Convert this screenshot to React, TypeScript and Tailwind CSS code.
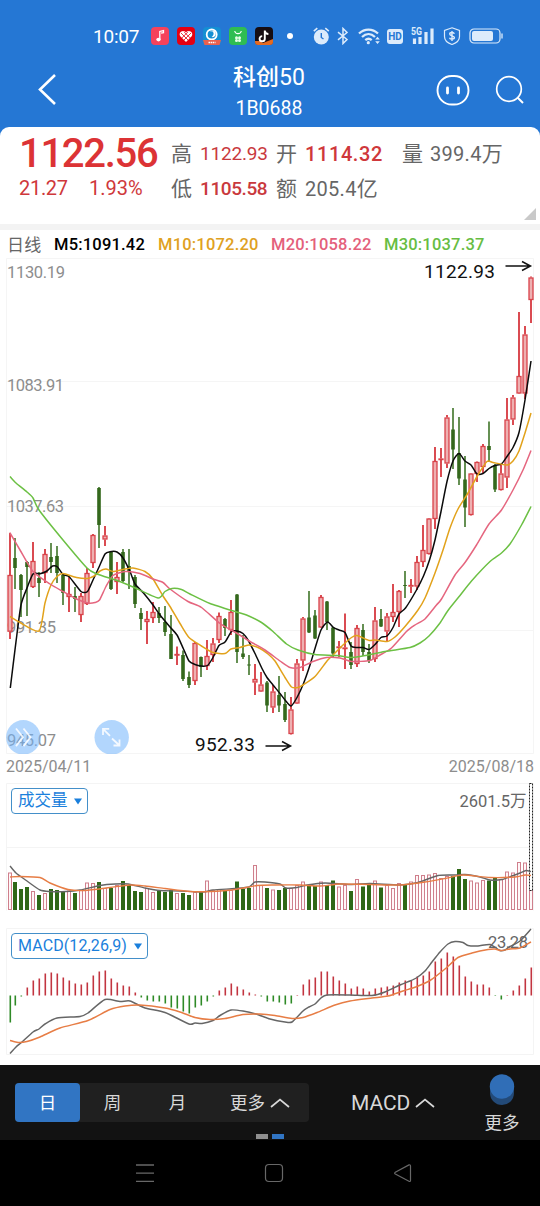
import React from 'react';

type Candle = [number, number, number, number, number];
type Point = [number, number];

// [high, bodyTop, bodyBottom, low, rising]
const CANDLES: Candle[] = [
    [532.7, 575, 631.7, 639, 1], [538, 558, 568, 589, 0], [574, 575, 590, 617, 0], [561, 562, 567, 616, 0],
    [542, 561, 587, 588, 1], [572, 578, 583, 597, 0], [549, 554, 573, 583, 1], [543, 557, 562, 573, 0],
    [546, 556, 573, 583, 0], [573, 575, 593, 605, 0], [577, 594, 597, 612, 1], [587, 596, 599, 612, 0],
    [593, 596, 615, 622, 1], [568, 573, 604, 605, 1], [534, 535, 563, 568, 1], [487, 488, 525, 548, 0],
    [526, 535.5, 539.5, 546, 1], [552, 552, 589, 590, 0], [562, 577, 582, 594, 1], [549, 552, 581, 582, 0],
    [549, 566, 572, 589, 0], [575, 577, 604, 608, 0], [608, 613, 619, 630, 0], [611, 619, 622, 644, 1],
    [602, 612, 618, 623, 1], [607, 613, 618, 623, 0], [606, 622, 632, 636, 0], [615, 634, 659, 659, 0],
    [646.5, 654, 655, 665, 1], [650.5, 655, 679, 681, 0], [671.5, 677, 685, 688, 0], [642, 643, 681, 685, 1],
    [656.5, 657, 667, 677, 0], [640, 656, 666, 670, 1], [638, 643.5, 655, 662, 1], [612.5, 616, 640, 643, 1],
    [618, 619, 628, 636, 0], [600, 612, 630, 635, 1], [594, 594.5, 652, 663, 0], [635, 653.5, 657, 659, 0],
    [655, 664.5, 665.5, 675, 0], [664, 679, 682.5, 695, 1], [672, 684.5, 691.5, 692, 1], [681, 682.5, 705.5, 712, 0],
    [685, 691.5, 707.5, 713, 1], [676, 695, 705.5, 712, 0], [692, 704, 720, 722, 0], [697, 709.5, 734, 734.5, 1],
    [659, 663.5, 703.5, 704, 1], [617, 618.5, 660.5, 671, 1], [591, 617.5, 632.5, 633, 0], [610, 615.5, 638.5, 639, 0],
    [595, 597, 627.5, 628, 1], [601, 601.5, 622, 630, 0], [627, 627.5, 653.5, 657, 0], [641, 646.5, 648, 657, 1],
    [613.5, 647.5, 648.5, 669, 1], [642, 652, 665, 669, 0], [625, 628, 664, 667, 1], [624, 630, 652, 656, 0],
    [644, 652, 661, 663, 0], [607, 620.5, 659, 662, 1], [609, 619, 626.5, 627, 0], [613, 616.5, 631.5, 642, 1],
    [584, 612, 617, 622, 1], [590, 591, 612, 627, 1], [571, 585, 586, 598, 0], [579, 585, 586.5, 593, 1],
    [556, 562, 586.5, 590, 1], [525, 550, 562, 567, 1], [518, 518.5, 554, 554.5, 1], [447, 461, 519, 529, 1],
    [448, 458.5, 459.5, 477, 1], [415, 417.5, 463.5, 468, 1], [408, 429.5, 449.5, 469, 0], [417, 453, 478.5, 485, 0],
    [456, 479.5, 507.5, 527, 0], [473, 473.5, 515, 515.5, 1], [461.5, 462, 474, 482, 1], [444, 446, 467, 473, 1],
    [421.5, 446, 450, 462, 0], [464, 465, 489.5, 492, 0], [465, 473.5, 490, 490.5, 1], [398, 419.5, 477.5, 488, 1],
    [395, 397.5, 419.5, 425, 1], [312, 376, 393.5, 394, 1], [326, 334.5, 393.5, 399, 1], [276.5, 277.5, 300, 323, 1],
];

const VOLUME_TOPS = [
    872.5, 882, 889, 887, 891, 895, 893, 889, 890, 891, 890.5, 893, 890, 882.5, 883, 882, 888, 888, 885, 881, 885, 891,
    892, 888, 892, 890, 892, 890, 893, 893, 895, 892, 892, 880.5, 890, 889, 890.5, 890, 881.5, 889, 888, 865, 885, 888,
    889.5, 890, 888, 888, 885, 881.5, 885, 886, 881.5, 885, 880.5, 886.5, 885, 891, 879, 886.5, 883, 880.5, 887.5, 885,
    888, 883, 885, 881.5, 875, 875, 874.5, 873, 878, 876, 876, 869, 879, 880.5, 882.5, 880, 880.5, 877, 879, 871.5,
    872.5, 862, 862.5, 890,
];

const MACD_BARS = [
    -27, -10, -1, 8, 15, 17, 22, 23, 22, 18, 15, 12, 11, 13, 20, 24, 25, 17, 13, 10, 9, 3, -2, -5, -6, -6, -8, -12,
    -13, -16, -18, -12, -10, -6, -1, 5, 8, 12, 9, 6, 3, 1, -1, -6, -6, -7, -9, -8, 0.5, 11, 16, 18, 24, 24, 19, 15, 12,
    7, 9, 7, 4, 7, 8, 9, 10, 13, 15, 15, 19, 20, 24, 34, 37, 43, 39, 30, 19, 14, 11, 11, 8, -0.5, -4, 0.5, 5, 10, 17, 28,
];

const M5: Point[] = [
    [10.3, 688], [16, 641.7], [21, 605], [27, 588], [33, 574], [40, 573.7], [47, 571], [52.5, 566], [57.5, 567],
    [63, 574.5], [69, 576.5], [81, 591.5], [87.5, 591.5], [93, 580], [99.5, 566], [105, 554], [110, 551.7], [117, 552],
    [123, 558], [130, 571.5], [135, 584], [143.5, 593], [153, 605], [160, 615], [170, 627], [177, 635], [183.5, 649],
    [189, 661], [195, 664.5], [201, 666], [207.5, 665.5], [213, 657.5], [219, 645.5], [225, 642], [231.5, 631.5],
    [237, 631], [243, 633.5], [248, 640], [255, 653.5], [262, 668.5], [267, 677.5], [273, 685], [280, 693.5],
    [285, 700], [291, 706], [297, 697.5], [303.5, 683.5], [310, 665], [315, 648.5], [321, 630], [327.5, 622],
    [333.5, 627.5], [339, 630], [345, 632.5], [351, 646], [357, 647.5], [363, 647.5], [369, 649.5], [375, 644.5],
    [381, 637.5], [387, 636], [393, 627.5], [399, 614], [405.5, 608], [416.5, 590], [423.5, 576], [429.5, 560],
    [435, 540], [441, 511.5], [447, 481.5], [453, 461], [459, 453.5], [465, 461], [471, 465], [477, 474], [483, 473.5],
    [489, 468.5], [495, 465.5], [501.5, 464], [507, 456.5], [513, 447.5], [519, 432.5], [525, 400], [531, 361],
];

const M10: Point[] = [
    [10, 616.5], [20, 622.5], [39, 631], [45, 603], [51, 585], [57, 576.5], [63, 573.5], [76.5, 577.5], [87.5, 578.5],
    [95, 575.5], [100, 571], [106, 569], [113, 571.5], [123, 569.5], [133, 568], [145, 571.5], [153, 579], [163, 596],
    [170, 606.5], [180, 623.5], [189, 637.5], [201.5, 646], [213, 652.5], [225, 653.5], [231, 649], [240, 647.5],
    [249, 645], [260, 648.5], [268, 654], [275, 661], [285, 677.5], [291.5, 687], [298, 687.5], [303, 685],
    [315, 676.5], [327, 661], [333, 655], [343, 645], [351.5, 637.5], [357, 635.5], [369, 640.5], [375, 640],
    [387, 641.5], [395, 637], [405, 626.5], [418, 610], [425, 598], [435, 573], [443, 550], [450, 528], [458, 509],
    [468, 493], [477, 476.5], [487, 461.5], [493, 462.5], [507, 465], [513, 461], [519, 451], [525, 433], [531, 413],
];

const M20: Point[] = [
    [10, 533], [20, 550], [33, 571.5], [50, 584], [63, 591.5], [76.5, 599], [88, 603], [95, 602.5], [99.5, 600],
    [106, 586.5], [113, 575.5], [125, 571.5], [140, 573.5], [153, 579], [163, 582.5], [170, 589], [188, 601.5],
    [201.5, 607.5], [220, 623.5], [236.5, 633], [250, 641.5], [265, 650], [280, 661], [290, 667.5], [300, 667.5],
    [313, 661.5], [326.5, 657.5], [340, 658], [351.5, 661.5], [370, 660.5], [380, 655], [391.5, 648], [406.5, 631.5],
    [415, 625], [425, 619], [436.5, 605], [441.5, 599], [455, 575], [465, 562.5], [476.5, 545], [489, 524],
    [501.5, 510], [513, 490], [523, 470], [531, 450.5],
];

const M30: Point[] = [
    [10, 476.5], [16, 483], [27, 492], [33, 498], [39, 510], [63, 540], [87, 568], [97, 574], [117, 580.5],
    [133, 587], [158, 598], [165, 591.5], [172, 588.5], [181.5, 589.5], [190, 594], [210, 603.5], [236.5, 612],
    [246.5, 615], [261.5, 622.5], [273, 631.5], [286.5, 644], [298, 650], [315, 654.5], [336.5, 655.5], [350, 657.5],
    [360, 656.5], [385, 651.5], [410, 647.5], [420, 643], [429, 636], [440, 623], [448, 610.5], [460, 595.5],
    [471.5, 581], [490, 561.5], [501.5, 553], [510, 544], [521.5, 525], [531, 506.5],
];

const VOL_FAST: Point[] = [
    [10, 866], [16, 873], [27, 881], [40, 890], [50, 891.5], [66, 891.5], [80, 890], [100, 885.5], [115, 884],
    [128, 884], [145, 888], [160, 890.5], [180, 891], [203, 892], [213, 890], [235, 888.5], [249, 887], [255, 882],
    [265, 882], [280, 884], [286, 888], [297, 887.5], [307, 885], [325, 883], [350, 884.5], [370, 883.5], [400, 885],
    [418, 882.5], [438, 875.5], [455, 875], [465, 874.5], [480, 877], [490, 880], [502, 879.5], [512, 876],
    [520, 873], [526, 870.5], [531, 871.5],
];

const VOL_SLOW: Point[] = [
    [10, 877], [20, 876.5], [40, 877.5], [50, 883], [68, 889.5], [85, 890.5], [110, 887.5], [130, 885], [145, 886],
    [165, 888.5], [190, 891.5], [210, 891.5], [235, 889.5], [257, 885.5], [275, 885], [300, 885], [320, 886],
    [340, 884], [370, 884.5], [400, 885], [425, 882], [445, 878.5], [463, 875], [490, 877.5], [515, 877], [525, 875],
    [531, 875.5],
];

const DIF: Point[] = [
    [10, 1053.5], [16, 1047], [22, 1042], [33, 1032], [39, 1029], [45, 1024], [57, 1018], [80, 1016.5], [88, 1013],
    [105, 999.5], [120, 1001.5], [130, 1001], [145, 1008], [165, 1012.5], [189, 1024], [195, 1023], [202, 1023.5],
    [213, 1020.5], [220, 1015.5], [231, 1010], [243, 1011], [256, 1014], [270, 1019], [285, 1022], [292, 1022],
    [303, 1011], [309, 1007], [315, 1004], [321, 998], [327, 995], [350, 995], [372, 995.5], [385, 992], [400, 985],
    [410, 981], [417, 977.5], [425, 971], [432, 962], [440, 952], [448, 944], [455, 941.5], [463, 942.5],
    [468, 945.5], [478, 946], [490, 944.5], [500, 950.5], [505, 950], [510, 946.5], [520, 941], [531, 929],
];

const DEA: Point[] = [
    [10, 1040.5], [18, 1042.5], [27, 1041.5], [40, 1037], [60, 1028], [88, 1020.5], [110, 1009.5], [125, 1006],
    [140, 1005], [165, 1008], [180, 1012], [195, 1017.5], [210, 1019.5], [225, 1018.5], [243, 1014.5], [260, 1014],
    [275, 1015.5], [292, 1018.5], [303, 1017.5], [317, 1012.5], [335, 1005], [350, 1001], [372, 998], [388, 996],
    [403, 991], [417, 986.5], [430, 980.5], [445, 969], [458, 957.5], [472, 953], [488, 949.5], [495, 949],
    [501, 950.5], [510, 949], [520, 948], [531, 942],
];

const barX = (i: number) => (i === 0 ? 10 : 9 + i * 6);

// Catmull-Rom through all points
const toPath = (pts: Point[]) => {
    let d = `M${pts[0][0]} ${pts[0][1]}`;
    for (let i = 0; i < pts.length - 1; i++) {
        const p0 = pts[i - 1] || pts[i];
        const p1 = pts[i];
        const p2 = pts[i + 1];
        const p3 = pts[i + 2] || p2;
        d += `C${p1[0] + (p2[0] - p0[0]) / 9} ${p1[1] + (p2[1] - p0[1]) / 9} ${p2[0] - (p3[0] - p1[0]) / 9} ${p2[1] - (p3[1] - p1[1]) / 9} ${p2[0]} ${p2[1]}`;
    }
    return d;
};

const Line: React.FC<{ points: Point[]; color: string; width?: number }> = ({ points, color, width = 1.5 }) => (
    <path d={toPath(points)} fill="none" stroke={color} strokeWidth={width} strokeLinejoin="round" />
);

const StatusBar: React.FC = () => (
    <div className="flex items-center h-[54px] pt-[18px] pl-[93px] text-white">
        <span className="w-[58px] text-[19px] tracking-[-0.2px] leading-none">10:07</span>
        <div className="flex gap-2">
            <svg className="w-[18px] h-[18px]" viewBox="0 0 18 18">
                <rect width="18" height="18" rx="4" fill="#f5425b" />
                <path d="M8.8 12.3V4.4l3.7-.8v2l-2.4.5" fill="none" stroke="#fff" strokeWidth="1.3" />
                <ellipse cx="7.5" cy="12.6" rx="2.2" ry="1.8" fill="#fff" />
            </svg>
            <svg className="w-[18px] h-[18px]" viewBox="0 0 18 18">
                <rect width="18" height="18" rx="4" fill="#e50012" />
                <path d="M9 15L3.3 9.2C1 6 5.5 1.8 9 5.3c3.5-3.5 8 .7 5.7 3.9z" fill="#fff" />
                <path d="M4 6l8 8M7 4.8l6.5 6.5M14 6l-8 8M11 4.8l-6.5 6.5" stroke="#e50012" strokeWidth=".8" />
            </svg>
            <svg className="w-[18px] h-[18px]" viewBox="0 0 18 18">
                <rect width="18" height="18" rx="4" fill="#148fd3" />
                <circle cx="8.7" cy="7.5" r="5" fill="none" stroke="#fff" strokeWidth="1.8" />
                <path d="M7 4.5c4-1 5 3.5 1.5 5.5 4 1 5.5-4 3-6z" fill="#fff" />
                <path d="M0 13h18l-1.5 5h-15z" fill="#e9604f" />
                <path d="M5.5 15.5h7" stroke="#fff" strokeWidth="1.4" strokeDasharray="1.5 .6" />
            </svg>
            <svg className="w-[18px] h-[18px]" viewBox="0 0 18 18">
                <rect width="18" height="18" rx="4" fill="#2fbd52" />
                <path d="M5.7 4c.6 3.5 6 3.5 6.6 0" fill="none" stroke="#fff" strokeWidth="1.1" />
                <g fill="#e6ffe9">
                    <circle cx="7.5" cy="10.7" r="1.5" />
                    <circle cx="10.5" cy="10.7" r="1.5" />
                    <circle cx="7.5" cy="13.5" r="1.5" />
                    <circle cx="10.5" cy="13.5" r="1.5" />
                </g>
            </svg>
            <svg className="w-[18px] h-[18px]" viewBox="0 0 18 18">
                <rect width="18" height="18" rx="4" fill="#160d12" />
                <path d="M0 14l5 0 3 2 10-4v3a3 3 0 0 1-3 3H3a3 3 0 0 1-3-3z" fill="#e56a20" />
                <path d="M9.8 3.5v8.2a2.6 2.6 0 1 1-2.6-2.6M9.8 4c.4 2 1.8 3 3.6 3" fill="none" stroke="#fff" strokeWidth="1.9" />
            </svg>
        </div>
        <span className="w-[6px] h-[6px] rounded-full bg-white ml-[14px]" />
        <svg className="w-[18px] h-[18px] ml-5" viewBox="0 0 18 18">
            <circle cx="8.3" cy="10" r="7.5" fill="#dcebfb" />
            <path d="M.8 4.200l3.500-3M15.800 4.200l-3.500-3" stroke="#dcebfb" strokeWidth="1.6" />
            <path d="M8.300 6v4.500l2.200 1.500" fill="none" stroke="#2577d4" strokeWidth="1.4" />
        </svg>
        <svg className="w-[12px] h-[18px] ml-[6px]" viewBox="0 0 12 18">
            <path d="M1 5.2l9 7.3-4 4V1.5l4 4-9 7.3" fill="none" stroke="#dcebfb" strokeWidth="1.5" />
        </svg>
        <svg className="w-[22px] h-[18px] ml-[9px]" viewBox="0 0 22 18">
            <g fill="none" stroke="#dcebfb" strokeWidth="2.3">
                <path d="M1 6.5c5.5-5.3 13.5-5.3 19 0" />
                <path d="M4 10c4-3.8 9-3.8 13 0" />
                <path d="M7.3 13.2c2-1.8 4.4-1.8 6.4 0" />
            </g>
            <circle cx="10.3" cy="15.7" r="1.6" fill="#dcebfb" />
            <path d="M19.5 9.8l2.3 2.8h-4.6zM19.5 17l2.3-2.8h-4.6z" fill="#dcebfb" />
        </svg>
        <span className="w-4 h-[15px] ml-[7px] rounded-[3px] bg-[#dcebfb] text-[#2577d4] text-[10px] font-bold leading-[15px] text-center">HD</span>
        <svg className="w-6 h-[18px] ml-2" viewBox="0 0 24 18">
            <text x="0" y="8" fontSize="10" fontWeight="700" fill="#dcebfb" textLength="11" lengthAdjust="spacingAndGlyphs">5G</text>
            <path d="M3.5 11.5v5.500M9 10v7M15 5v12M21 1.500v15.500" stroke="#dcebfb" strokeWidth="3.200" />
        </svg>
        <svg className="w-[18px] h-[18px] ml-2" viewBox="0 0 18 18">
            <path d="M9 .8l7.5 2.7v6c0 4-3 6.5-7.5 8-4.5-1.5-7.5-4-7.5-8v-6z" fill="none" stroke="#dcebfb" strokeWidth="1.2" />
            <path d="M11.3 6.8c-.4-1.7-4.6-1.7-4.6.3 0 2.3 4.7 1.2 4.7 3.5 0 2-4.3 2-4.900.1M9 4v10" fill="none" stroke="#dcebfb" strokeWidth="1.4" />
        </svg>
        <svg className="w-[34px] h-[18px] ml-2" viewBox="0 0 34 18">
            <rect x="1" y="2" width="30" height="14" rx="4" fill="none" stroke="#dcebfb" strokeWidth="1.2" />
            <rect x="3" y="4" width="21" height="10" rx="2" fill="#dcebfb" />
            <path d="M33 6.5v5" stroke="#dcebfb" strokeWidth="1.3" />
        </svg>
    </div>
);

const TitleBar: React.FC = () => (
    <div className="flex items-start justify-between h-[73px] pl-[37px] pr-4 text-white">
        <svg className="w-[20px] h-[34px] mt-[18px]" viewBox="0 0 20 34">
            <path d="M18 3L3 17.5 18 32" fill="none" stroke="#fff" strokeWidth="2.6" />
        </svg>
        <div className="flex flex-col items-center pt-[10px] pl-[45px]">
            <h1 className="text-[23px] leading-[28px] font-medium">科创<span className="font-normal">50</span></h1>
            <p className="text-[19.5px] leading-[22px] mt-[6px] tracking-[0px]">1B0688</p>
        </div>
        <div className="flex items-center gap-[25px] pt-[20px]">
            <svg className="w-[34px] h-[32px]" viewBox="0 0 34 32">
                <rect x="1.5" y="2" width="31" height="28.5" rx="14.2" fill="none" stroke="#fff" strokeWidth="1.9" />
                <path d="M11.5 14v5M22.500 14v5" stroke="#fff" strokeWidth="2.8" strokeLinecap="round" />
            </svg>
            <svg className="w-[29px] h-[30px]" viewBox="0 0 29 30">
                <circle cx="14" cy="14" r="12.3" fill="none" stroke="#fff" strokeWidth="1.7" />
                <path d="M22.5 22.5l5.500 5.500" stroke="#fff" strokeWidth="2" />
            </svg>
        </div>
    </div>
);

const QuotePanel: React.FC = () => (
    <section className="relative flex h-[97px] rounded-t-[9px] bg-white">
        <div className="w-[171px] pl-[19px] pt-[5px] text-[#dc3335]">
            <p className="text-[40px] leading-[44px] font-medium tracking-[-1.3px]">1122.56</p>
            <p className="flex text-[20px] leading-[24px] text-[#cf383b]">
                <span className="w-[70px] tracking-[-0.3px]">21.27</span>
                <span className="tracking-[0px]">1.93%</span>
            </p>
        </div>
        <div className="pt-[12px] text-[20px] leading-[30px] text-[#666] whitespace-nowrap">
            <div className="flex">
                <span className="w-[29px] text-[21px]">高</span>
                <span className="w-[76px] text-[19px] tracking-[-0.2px] text-[#c9393d]">1122.93</span>
                <span className="w-[29px] text-[21px]">开</span>
                <span className="w-[97px] font-medium text-[#cf383b] tracking-[0.6px]">1114.32</span>
                <span className="w-[28px] text-[21px]">量</span>
                <span className="tracking-[0.3px]">399.4<span className="text-[21px]">万</span></span>
            </div>
            <div className="flex mt-[5px]">
                <span className="w-[29px] text-[21px]">低</span>
                <span className="w-[76px] text-[19px] font-medium tracking-[-0.4px] text-[#c9393d]">1105.58</span>
                <span className="w-[29px] text-[21px]">额</span>
                <span className="tracking-[0.3px]">205.4<span className="text-[21px]">亿</span></span>
            </div>
        </div>
        <svg className="absolute right-1 bottom-1 w-3 h-3" viewBox="0 0 12 12">
            <path d="M12 0v12H0z" fill="#c9c9c9" />
        </svg>
    </section>
);

const Averages: React.FC = () => (
    <div className="flex items-center h-[28px] pt-[3px] pl-[7px] text-[16.5px] font-medium whitespace-nowrap tracking-[0.2px]">
        <span className="w-[47px] text-[17px] font-normal text-[#666]">日线</span>
        <span className="w-[104px] text-black">M5:1091.42</span>
        <span className="w-[113px] text-[#dfa122]">M10:1072.20</span>
        <span className="w-[113px] text-[#e4607b]">M20:1058.22</span>
        <span className="text-[#67bd43]">M30:1037.37</span>
    </div>
);

const PriceChart: React.FC = () => (
    <svg className="block w-[540px] h-[496px]" viewBox="0 258 540 496">
        <g stroke="#f5f5f5" strokeWidth="1" fill="none">
            <path d="M6.5 258.5H533.5V753.5H6.500zM6.5 381.5H533.5M6.500 506.5H533.5M6.5 630.5H533.5" />
        </g>
        <g fill="#8d8d8d" fontSize="16.5">
            <text x="7" y="278" textLength="58">1130.19</text>
            <text x="7" y="391" textLength="57">1083.91</text>
            <text x="7" y="512" textLength="57">1037.63</text>
            <text x="7" y="633" textLength="49">991.35</text>
            <text x="7" y="746" textLength="49">945.07</text>
        </g>
        {CANDLES.map(([high, top, bottom, low, up], i) => {
            const x = barX(i);
            return up ? (
                <g key={i} stroke="#d9434a">
                    <path d={`M${x} ${high}V${top}M${x} ${bottom}V${low}`} strokeWidth="1.9" />
                    <rect x={x - 2} y={top + 0.5} width="4" height={Math.max(bottom - top - 1, 0.6)} fill="#eeb0b1" strokeWidth="1.300" />
                </g>
            ) : (
                <g key={i}>
                    <path d={`M${x} ${high}V${low}`} stroke="#4b7d35" strokeWidth="1.7" />
                    <rect x={x - 1.8} y={top} width="3.6" height={Math.max(bottom - top, 1)} fill="#34681c" />
                </g>
            );
        })}
        <Line points={M5} color="#0b0b0b" />
        <Line points={M10} color="#e2a21b" />
        <Line points={M20} color="#e5667f" />
        <Line points={M30} color="#6cc044" />
        <g fill="#111" fontSize="19">
            <text x="424" y="277.5" textLength="71">1122.93</text>
            <text x="195" y="750.5" textLength="60">952.33</text>
        </g>
        <g fill="none" stroke="#111" strokeWidth="1.5">
            <path d="M505.5 266h24M522 261.5l8.500 4.500-8.500 4.500" />
            <path d="M265.5 746h24M282 741.5l8.500 4.500-8.500 4.500" />
        </g>
        <g fill="#72b4fb" fillOpacity=".55">
            <circle cx="23.3" cy="737.3" r="17.2" />
            <circle cx="111.7" cy="737.3" r="17.2" />
        </g>
        <g fill="none" stroke="#fff" strokeOpacity=".85" strokeWidth="1.8">
            <path d="M16 728.5l7 8.8-7 8.8M23.5 728.5l7 8.8-7 8.8" />
            <path d="M103 735v-6.2h6.2M103 728.8l7 7M119.5 739.5v6h-6M119.5 745.5l-7.500-7" />
        </g>
    </svg>
);

const IndicatorButton: React.FC<{ label: string; className: string }> = ({ label, className }) => (
    <button className={`absolute left-[11px] flex items-center justify-between rounded-[4px] border border-[#438fc9] bg-white pl-[6px] pr-[5px] text-[#1a7fdc] whitespace-nowrap ${className}`}>
        <span>{label}</span>
        <svg className="w-2 h-[7px]" viewBox="0 0 8 7">
            <path d="M0 .5h8L4 6.500z" fill="#1a7fdc" />
        </svg>
    </button>
);

const VolumeChart: React.FC = () => (
    <div className="relative">
        <svg className="block w-[540px] h-[146px]" viewBox="0 777 540 146">
            <path d="M6.5 910.5V783.5H533.5V910.5M6.5 847.5H533.5" fill="none" stroke="#f4f4f4" />
            {VOLUME_TOPS.map((top, i) => {
                const x = barX(i);
                return CANDLES[i][4] ? (
                    <rect key={i} x={x - 1.5} y={top + 0.5} width="3" height={909 - top} fill="#fff7f8" stroke="#cf7f8c" />
                ) : (
                    <rect key={i} x={x - 2} y={top} width="4" height={910 - top} fill="#2f6817" />
                );
            })}
            <rect x="529.5" y="783.5" width="3" height="107" fill="#fff" stroke="#222" strokeDasharray="2 1" />
            <Line points={VOL_FAST} color="#666" width={1.4} />
            <Line points={VOL_SLOW} color="#e77d45" width={1.4} />
            <text x="459.5" y="807" fontSize="16.5" fill="#666" textLength="67">2601.5万</text>
        </svg>
        <IndicatorButton label="成交量" className="top-[11px] w-[77px] h-[26px] text-[16.5px]" />
    </div>
);

const MacdChart: React.FC = () => (
    <div className="relative">
        <svg className="block w-[540px] h-[142px]" viewBox="0 923 540 142">
            <path d="M6.5 928.5H533.5V1054.5H6.500z" fill="none" stroke="#f4f4f4" />
            {MACD_BARS.map((v, i) => (
                <path key={i} d={`M${barX(i) + 0.3} 995.5V${995.5 - v}`} stroke={v > 0 ? '#c23540' : '#2f8a27'} strokeWidth="1.6" />
            ))}
            <text x="488" y="948" fontSize="16.5" fill="#666" textLength="40">23.28</text>
            <Line points={DIF} color="#666" />
            <Line points={DEA} color="#e77d45" />
        </svg>
        <IndicatorButton label="MACD(12,26,9)" className="top-[10px] w-[137px] h-[26px] text-[16px] tracking-[0.1px]" />
    </div>
);

const ChevronUp = () => (
    <svg className="w-5 h-[10px]" viewBox="0 0 20 10">
        <path d="M1 9l9-7.5L19 9" fill="none" stroke="#d8d8d8" strokeWidth="1.7" />
    </svg>
);

const BottomBar: React.FC = () => (
    <div className="relative flex h-[75px] bg-[#121212] text-[#d8d8d8]">
        <div className="flex mt-[18px] ml-[15px] w-[294px] h-[39px] rounded-[4px] bg-[#202020] text-[17.5px]">
            <button className="w-[65px] rounded-[4px] bg-[#3175c3] pt-[2px] text-white">日</button>
            <button className="w-[65px] pt-[2px]">周</button>
            <button className="w-[65px] pt-[2px]">月</button>
            <button className="flex items-center justify-center gap-[5px] w-[99px] pl-[1px]">
                <span className="pt-[2px]">更多</span>
                <ChevronUp />
            </button>
        </div>
        <button className="flex items-center gap-[5px] h-[39px] mt-[18px] ml-[42px]">
            <span className="pt-[2px] text-[21px] tracking-[-0.1px]">MACD</span>
            <ChevronUp />
        </button>
        <button className="flex flex-col items-center w-[36px] mt-[8px] ml-auto mr-[20px]">
            <svg className="w-[26px] h-[34px]" viewBox="0 0 26 34">
                <circle cx="13" cy="20" r="12" fill="#234a78" />
                <circle cx="13" cy="13.5" r="12.2" fill="#306eb7" />
            </svg>
            <span className="text-[17.5px] leading-[20px] mt-[6px] whitespace-nowrap">更多</span>
        </button>
        <span className="absolute left-[256px] bottom-[1px] w-3 h-[5px] bg-[#8f8f8f]" />
        <span className="absolute left-[272px] bottom-[1px] w-3 h-[5px] bg-[#3175c3]" />
    </div>
);

const SystemNav: React.FC = () => (
    <div className="flex items-center h-[66px] pl-[135px] gap-[109px] bg-black">
        <svg className="w-5 h-5" viewBox="0 0 20 20">
            <path d="M1 2h18M1 10.2h18M1 18.3h18" stroke="#686868" strokeWidth="1.3" />
        </svg>
        <svg className="w-5 h-5" viewBox="0 0 20 20">
            <rect x="1.5" y="1.5" width="17" height="17" rx="3.5" fill="none" stroke="#686868" strokeWidth="1.2" />
        </svg>
        <svg className="w-5 h-5" viewBox="0 0 20 20">
            <path d="M17.5 3v14.5c0 .9-.7 1.2-1.5.8L2.3 11q-1.3-.8 0-1.700L16 1.900c.8-.4 1.5 0 1.500 1.100z" fill="none" stroke="#686868" strokeWidth="1.2" />
        </svg>
    </div>
);

const App: React.FC = () => (
    <div className="w-[540px] h-[1206px] overflow-hidden bg-white font-[Roboto,'Noto_Sans_CJK_SC',sans-serif]">
        <header className="bg-[#2577d4]">
            <StatusBar />
            <TitleBar />
            <QuotePanel />
        </header>
        <div className="h-[6px] bg-[#f3f3f3]" />
        <Averages />
        <PriceChart />
        <div className="flex justify-between h-[23px] px-[6px] text-[16px] leading-[25px] text-[#8d8d8d]">
            <span className="tracking-[0px]">2025/04/11</span>
            <span className="tracking-[0px]">2025/08/18</span>
        </div>
        <VolumeChart />
        <MacdChart />
        <BottomBar />
        <SystemNav />
    </div>
);

export default App;
